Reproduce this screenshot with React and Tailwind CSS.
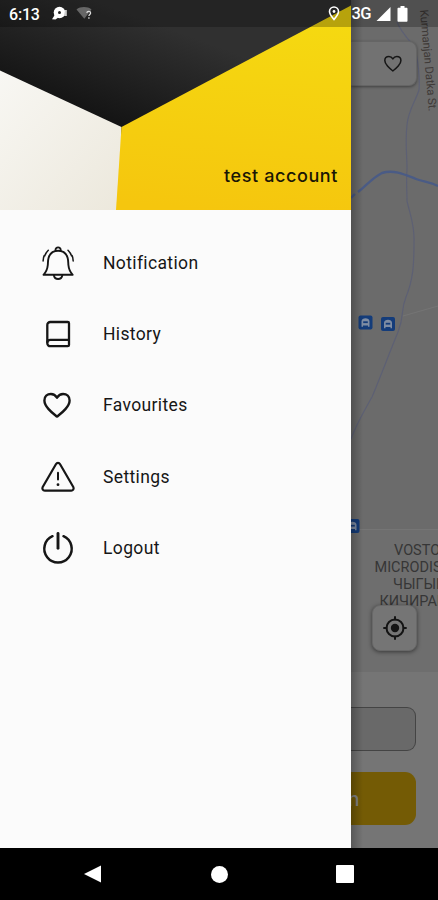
import React from "react";

function BellIcon() {
  return (
    <svg className="w-9 h-9" viewBox="0 0 36 36" fill="none" stroke="#161616" strokeWidth="1.900" strokeLinecap="round" strokeLinejoin="round">
      <path d="M3.500 29.800h29.200c-2.500-2.700-3.900-5.400-4.300-9.800-.2-2.500-.1-5-.8-7.300-1.400-4.500-5-7-9.500-7s-8.100 2.500-9.500 7c-.7 2.300-.6 4.800-.8 7.300-.4 4.400-1.800 7.100-4.300 9.800z" />
      <path d="M15.500 5.500c-.3-4.200 5.500-4.200 5.200 0" />
      <path d="M13.900 30.500c.9 4.600 7.500 4.600 8.400 0" />
      <path d="M8.300 5.300C6.100 7.500 5.500 8.500 4.800 10.800M4.300 10.500C3.400 12 3.200 13.500 3.100 16M28 5.300c2.200 2.200 2.800 3.200 3.500 5.500M32 10.500c.9 1.500 1.100 3 1.200 5.500" strokeWidth="1.500" />
    </svg>
  );
}

function BookIcon() {
  return (
    <svg className="w-9 h-9" viewBox="0 0 36 36" fill="none" stroke="#161616" strokeWidth="2.300" strokeLinejoin="round">
      <path d="M27.700 6H10.300a3 3 0 0 0-3 3v18.200a3 3 0 0 0 3 3h17.400a1.300 1.300 0 0 0 1.300-1.300V7.300A1.300 1.300 0 0 0 27.700 6z" />
      <path d="M7.300 26.700c0-1.900 1.200-2.800 3-2.800H29" />
    </svg>
  );
}

function HeartIcon({ className }) {
  return (
    <svg className={className} viewBox="0 0 36 36" fill="none" stroke="#161616" strokeWidth="2.400" strokeLinejoin="round">
      <path d="M17 29.600c-1.500-1.200-5.600-4.200-8.400-7.500-2.700-3.100-4.200-5.500-4.200-8.700 0-3.900 2.900-6.400 6.500-6.400 2.600 0 4.600 1.300 6.100 3.700 1.500-2.400 3.500-3.700 6.100-3.700 3.600 0 6.500 2.500 6.500 6.400 0 3.200-1.500 5.600-4.200 8.700-2.800 3.300-6.900 6.300-8.400 7.500z" />
    </svg>
  );
}

function WarningIcon() {
  return (
    <svg className="w-9 h-9" viewBox="0 0 36 36" fill="none" stroke="#161616" strokeWidth="2.200" strokeLinecap="round" strokeLinejoin="round">
      <path d="M15.900 5.200 2.700 28c-.9 1.700.2 3.700 2.100 3.700h26.400c1.900 0 3-2 2.100-3.700L20.100 5.200c-1-1.700-3.200-1.700-4.200 0z" />
      <path d="M18 13.800v6.700" strokeWidth="2" />
      <circle cx="18" cy="25.700" r="1.400" fill="#161616" stroke="none" />
    </svg>
  );
}

function PowerIcon() {
  return (
    <svg className="w-9 h-9" viewBox="0 0 36 36" fill="none" stroke="#161616" strokeWidth="2.500" strokeLinecap="round">
      <path d="M12.500 6.200a13.700 13.700 0 1 0 11 0" />
      <path d="M18 3.500v14.700" strokeWidth="2.900" />
    </svg>
  );
}

const menu = [
  { id: "notification", label: "Notification", Icon: BellIcon },
  { id: "history", label: "History", Icon: BookIcon },
  { id: "favourites", label: "Favourites", Icon: HeartIcon },
  { id: "settings", label: "Settings", Icon: WarningIcon },
  { id: "logout", label: "Logout", Icon: PowerIcon },
];

function StatusBar() {
  return (
    <div className="absolute inset-x-0 top-0 z-20 h-[27px] bg-black/25 flex items-center pl-[9px] pr-[30px] text-white font-['Roboto',sans-serif] font-medium">
      <span className="text-[16px] leading-none tracking-[-0.200px] mt-[2px]">6:13</span>
      <svg className="w-[17px] h-[15px] ml-[11px]" viewBox="0 0 17 15">
        <circle cx="8.500" cy="6.500" r="5.800" fill="#fff" />
        <path d="M1 13.200 4 8.500l3 3.300-2.500 1.700z" fill="#fff" />
        <path d="M14 4h1.800v6H13z" fill="#ccc" />
        <circle cx="8.500" cy="6.500" r="1.500" fill="#222" />
      </svg>
      <svg className="w-[17px] h-[15px] ml-[8px]" viewBox="0 0 17 15">
        <path d="M.5 3.500C4.500.3 11.500.3 15.500 3.500L8.300 12.800z" fill="#666" />
        <path d="M10.800 6.800c.3-2 3.800-2 3.800.2 0 1.400-1.700 1.400-1.700 3M12.900 11.300v1.400" fill="none" stroke="#ddd" strokeWidth="1.300" />
      </svg>
      <svg className="w-3 h-[15px] ml-auto" viewBox="0 0 12 15" fill="none" stroke="#fff" strokeWidth="1.600">
        <path d="M6 13.600C3.500 10.500 1.500 8.200 1.500 5.500a4.500 4.500 0 0 1 9 0c0 2.700-2 5-4.500 8.100z" />
        <circle cx="6" cy="5.500" r="1.400" fill="#fff" stroke="none" />
      </svg>
      <span className="text-[16.500px] leading-none ml-[11px] tracking-[-0.500px] mt-[2px]">3G</span>
      <svg className="w-[15px] h-[14px] ml-[5px]" viewBox="0 0 15 14">
        <path d="M14.500 0v14H.5z" fill="#fff" />
      </svg>
      <svg className="w-[11px] h-4 ml-[6px]" viewBox="0 0 11 16">
        <path d="M3.500 0h4v1.700H9.500c.6 0 1 .4 1 1v12.100c0 .6-.4 1-1 1h-8c-.6 0-1-.4-1-1V2.700c0-.6.4-1 1-1h2z" fill="#fff" />
      </svg>
    </div>
  );
}

function DrawerHeader() {
  return (
    <div className="relative h-[210px] shrink-0">
      <svg className="w-full h-full" viewBox="0 0 351 210" preserveAspectRatio="none">
        <defs>
          <linearGradient id="dark" gradientUnits="userSpaceOnUse" x1="160" y1="25" x2="122" y2="127">
            <stop offset="0" stopColor="#303030" />
            <stop offset="1" stopColor="#141414" />
          </linearGradient>
          <linearGradient id="yellow" x1="0.500" y1="0" x2="0.400" y2="1">
            <stop offset="0" stopColor="#f5da11" />
            <stop offset="1" stopColor="#f5c60e" />
          </linearGradient>
          <linearGradient id="cream" x1="0" y1="0" x2="1" y2="1">
            <stop offset="0" stopColor="#f8f7f3" />
            <stop offset="1" stopColor="#ece8dc" />
          </linearGradient>
        </defs>
        <path d="M0 0h351v210H0z" fill="url(#dark)" />
        <path d="M0 70.500 121.500 127l-2 83H0z" fill="url(#cream)" />
        <path d="M351 5.500 121.500 127l-5.500 83h235z" fill="url(#yellow)" />
      </svg>
      <span className="absolute right-[13px] top-[164px] font-['Inter',sans-serif] font-medium text-[18px] leading-6 tracking-[0.600px] text-[#1b1605]">
        test account
      </span>
    </div>
  );
}

function Drawer() {
  return (
    <aside className="w-[351px] shrink-0 bg-[#fbfbfb] flex flex-col">
      <DrawerHeader />
      <nav className="flex flex-col pt-[17px]">
        {menu.map(({ id, label, Icon }) => (
          <button key={id} type="button" className="flex items-center h-[71.400px] pl-10 gap-[27px] text-left">
            <Icon className="w-9 h-9" />
            <span className="font-['Roboto',sans-serif] font-[450] text-[17.500px] leading-6 tracking-[0.360px] text-[#161616]">
              {label}
            </span>
          </button>
        ))}
      </nav>
    </aside>
  );
}

function BusStop({ x, y }) {
  return (
    <g transform={`translate(${x} ${y})`}>
      <rect width="14" height="14" rx="2" fill="#143c7a" />
      <path d="M3 11.300V5.700c0-4 8-4 8 0v5.600H9.500V10h-5v1.300z" fill="#7f8da3" />
      <path d="M4.700 5.800h4.600v1.800H4.700z" fill="#143c7a" />
    </g>
  );
}

function MapCanvas() {
  return (
    <svg className="absolute inset-0 w-[87px] h-[672px]" viewBox="351 0 87 672">
      <path d="M351 0h87v672h-87z" fill="#6b6b6b" />
      <path d="M351 530h87v142h-87z" fill="#6e6e6e" />
      <path d="M351 529.500h87M403 316l35-10" stroke="#757575" strokeWidth="1" fill="none" />
      <path d="M397 22c4 10 10 16 17 24 4 12 6 32 5 44-3 10-11 21-12 35-2 16 0 30 0 44-1 12 0 22 0 32 3 14 8 24 7 42 0 22-1 37-8 54-6 15-1 17-8 35-9 22-18 46-26 65-8 14-16 28-21 42" fill="none" stroke="#5d6074" strokeWidth="1.200" />
      <path d="M351 198l4-4M358 192c7-5 14-14 24-19 12-4 24 2 34 6 8 3 14 3 22 7" fill="none" stroke="#4a5b85" strokeWidth="2.400" />
      <BusStop x="358.500" y="315.500" />
      <BusStop x="381" y="317" />
      <BusStop x="345.500" y="519" />
      <text transform="translate(420 10) rotate(85)" fontFamily="Roboto, sans-serif" fontSize="11.500" fill="#3f3a38" textLength="102">
        Kurmanjan Datka St.
      </text>
      <g fontFamily="Roboto, sans-serif" fontSize="14.500" fill="#363636">
        <text x="394" y="554.500">VOSTOK</text>
        <text x="374.500" y="571.500">MICRODISTRICT</text>
        <text x="393" y="588.500">ЧЫГЫШ</text>
        <text x="379.500" y="605.500">КИЧИРАЙОН</text>
      </g>
    </svg>
  );
}

function MapScreen() {
  return (
    <main className="relative flex-1 overflow-hidden bg-[#757575] flex flex-col">
      <div className="relative h-[672px] shrink-0 flex flex-col justify-between pt-[41px] pb-[21px] pr-[21px]">
        <MapCanvas />
        <div className="relative h-[45px] rounded-r-[8px] bg-[#727272] border-y border-r border-[#656565] shadow-[0_1px_3px_rgba(0,0,0,0.4)] flex items-center justify-end pr-[11px]">
          <HeartIcon className="w-[23px] h-[23px]" />
        </div>
        <div className="relative self-end w-[45px] h-[46px] rounded-[8px] bg-[#757575] border border-[#686868] shadow-[0_1px_4px_rgba(0,0,0,0.500)] flex items-center justify-center">
          <svg className="w-6 h-6" viewBox="0 0 24 24" fill="none" stroke="#141414" strokeWidth="2">
            <circle cx="12" cy="12" r="8.500" />
            <circle cx="12" cy="12" r="4.200" fill="#141414" stroke="none" />
            <path d="M12 .3v4M12 19.700v4M.3 12h4M19.700 12h4" />
          </svg>
        </div>
      </div>
      <div className="flex flex-col pt-[35px] pr-[22px] gap-[21px]">
        <div className="h-[44px] rounded-r-[9px] bg-[#696969] border-y border-r border-[#444444]" />
        <div className="h-[53px] rounded-r-[11px] bg-[#745b05] flex items-center pt-[2px]">
          <span className="-ml-[3px] font-['Inter',sans-serif] font-medium text-[19px] leading-none text-[#858585]">n</span>
        </div>
      </div>
      <div className="absolute inset-y-0 left-0 w-3 bg-gradient-to-r from-black/25 to-transparent" />
    </main>
  );
}

function NavBar() {
  return (
    <div className="h-[52px] bg-black flex items-center justify-between pl-[84px] pr-[84px]">
      <svg className="w-[18px] h-[18px]" viewBox="0 0 18 18">
        <path d="M17 .5v17L0 9z" fill="#fff" />
      </svg>
      <span className="w-[17px] h-[17px] rounded-full bg-white" />
      <span className="w-[18px] h-[18px] rounded-[1px] bg-white" />
    </div>
  );
}

export default function App() {
  return (
    <div className="relative w-[438px] h-[900px] overflow-hidden flex flex-col bg-black">
      <StatusBar />
      <div className="h-[848px] flex">
        <Drawer />
        <MapScreen />
      </div>
      <NavBar />
    </div>
  );
}
